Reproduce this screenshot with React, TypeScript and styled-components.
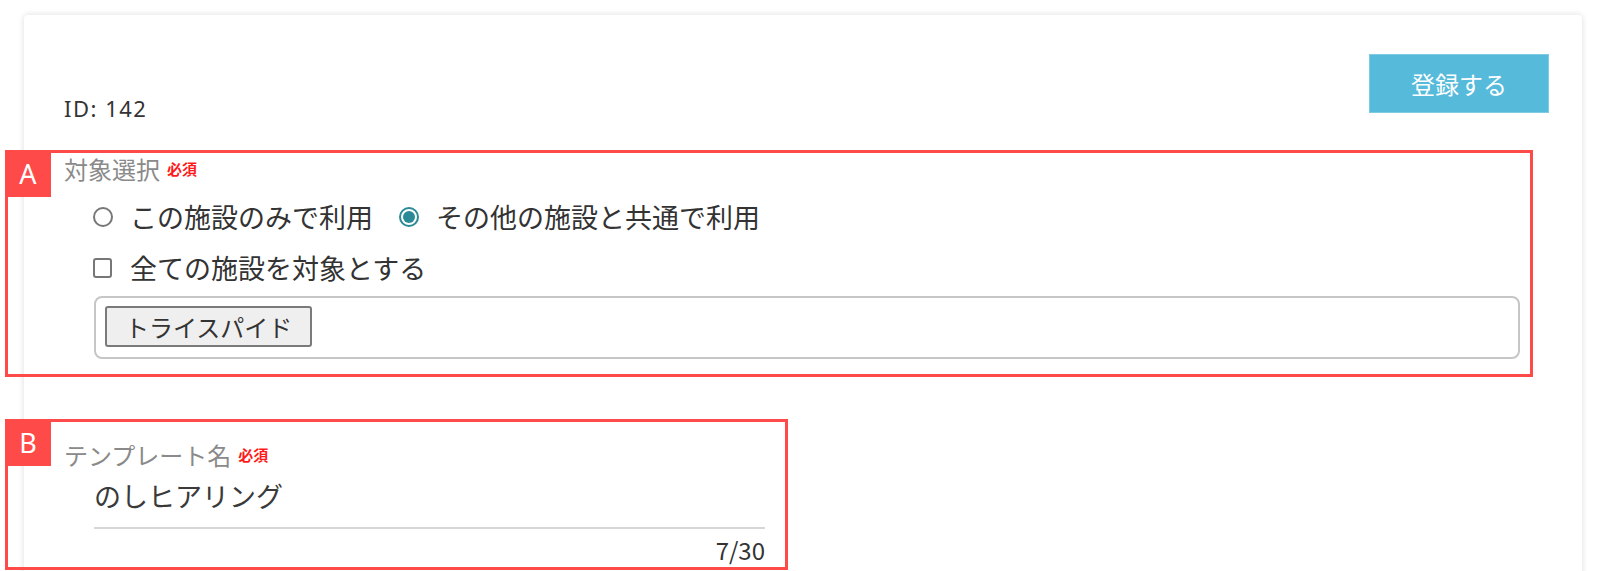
import React from 'react';
import styled, { createGlobalStyle } from 'styled-components';

const GlobalStyle = createGlobalStyle`
  html, body {
    margin: 0;
    padding: 0;
    background: #ffffff;
    overflow: hidden;
  }
  body {
    font-family: "Noto Sans CJK JP", "Noto Sans", sans-serif;
    color: #333333;
  }
`;

const Page = styled.div`
  padding: 15px 18px 0 24px;
  height: 571px;
  box-sizing: border-box;
  overflow: hidden;
`;

const Card = styled.div`
  background: #ffffff;
  border-radius: 4px;
  box-shadow: 0 0 6px rgba(0, 0, 0, 0.14);
  padding: 39px 33px 0 40px;
  min-height: 640px;
  box-sizing: border-box;
`;

const HeaderRow = styled.div`
  display: flex;
  justify-content: space-between;
  align-items: flex-end;
`;

const IdText = styled.div`
  font-family: "Noto Sans", sans-serif;
  font-size: 22px;
  letter-spacing: 1.5px;
  line-height: 28px;
  color: #333333;
`;

const SubmitButton = styled.button`
  width: 180px;
  height: 59px;
  margin-bottom: 9px;
  background: #56bada;
  border: 1px solid #7fcbe3;
  color: #ffffff;
  font-family: "Noto Sans CJK JP", sans-serif;
  font-size: 24px;
  padding: 0;
  cursor: pointer;
`;

const Section = styled.div<{ $top: number; $width?: number; $pad: number }>`
  position: relative;
  margin: ${(p) => p.$top}px 0 0 -59px;
  width: ${(p) => (p.$width ? `${p.$width}px` : '1528px')};
  border: 3px solid #ff4a4a;
  box-sizing: border-box;
  padding: ${(p) => p.$pad}px 0 0 56px;
`;

const Marker = styled.div`
  position: absolute;
  top: -3px;
  left: -3px;
  width: 46px;
  height: 47px;
  background: #ff4a4a;
  color: #ffffff;
  font-family: "Noto Sans", sans-serif;
  font-size: 27px;
  line-height: 47px;
  text-align: center;
`;

const FieldLabel = styled.div`
  display: flex;
  align-items: center;
  font-size: 24px;
  line-height: 32px;
  color: #8a8a8a;
`;

const Required = styled.span`
  margin-left: 7px;
  font-size: 15px;
  font-weight: 700;
  color: #ff1a1a;
`;

const OptionRow = styled.div<{ $top: number }>`
  display: flex;
  align-items: center;
  height: 36px;
  margin: ${(p) => p.$top}px 0 0 29px;
`;

const Option = styled.label`
  display: flex;
  align-items: center;
  margin-right: 26px;
  font-size: 27px;
  line-height: 36px;
  color: #333333;
`;

const RadioMark = styled.span<{ $checked?: boolean }>`
  width: 20px;
  height: 20px;
  flex-shrink: 0;
  box-sizing: border-box;
  border-radius: 50%;
  border: 2px solid ${(p) => (p.$checked ? '#2a8a96' : '#777777')};
  margin-right: 17px;
  display: flex;
  align-items: center;
  justify-content: center;
  &::after {
    content: '';
    display: ${(p) => (p.$checked ? 'block' : 'none')};
    width: 12px;
    height: 12px;
    border-radius: 50%;
    background: #2a8a96;
  }
`;

const CheckMark = styled.span`
  width: 19px;
  height: 20px;
  flex-shrink: 0;
  box-sizing: border-box;
  border-radius: 3px;
  border: 2px solid #777777;
  margin-right: 18px;
`;

const SelectBox = styled.div`
  margin: 10px 0 15px 30px;
  width: 1426px;
  height: 63px;
  box-sizing: border-box;
  border: 2px solid #c6c6c6;
  border-radius: 8px;
  padding: 8px 9px;
  display: flex;
  align-items: flex-start;
`;

const Tag = styled.span`
  display: inline-flex;
  align-items: center;
  height: 41px;
  box-sizing: border-box;
  padding: 0 18px;
  background: #efefef;
  border: 2px solid #7a7a7a;
  border-radius: 3px;
  font-size: 24px;
  color: #333333;
`;

const InputWrap = styled.div`
  margin: 7px 0 0 30px;
  width: 671px;
`;

const InputValue = styled.div`
  font-size: 27px;
  line-height: 36px;
  padding-bottom: 13px;
  border-bottom: 2px solid #d6d6d6;
  color: #3a3a3a;
`;

const Counter = styled.div`
  margin-top: 4px;
  text-align: right;
  font-size: 24px;
  line-height: 34px;
  color: #333333;
`;

const App = () => {
  return (
    <Page>
      <GlobalStyle />
      <Card>
        <HeaderRow>
          <IdText>ID: 142</IdText>
          <SubmitButton>登録する</SubmitButton>
        </HeaderRow>

        <Section $top={28} $pad={0}>
          <Marker>A</Marker>
          <FieldLabel>
            対象選択<Required>必須</Required>
          </FieldLabel>
          <OptionRow $top={14}>
            <Option>
              <RadioMark />
              この施設のみで利用
            </Option>
            <Option>
              <RadioMark $checked />
              その他の施設と共通で利用
            </Option>
          </OptionRow>
          <OptionRow $top={15}>
            <Option>
              <CheckMark />
              全ての施設を対象とする
            </Option>
          </OptionRow>
          <SelectBox>
            <Tag>トライスパイド</Tag>
          </SelectBox>
        </Section>

        <Section $top={42} $width={783} $pad={17}>
          <Marker>B</Marker>
          <FieldLabel>
            テンプレート名<Required>必須</Required>
          </FieldLabel>
          <InputWrap>
            <InputValue>のしヒアリング</InputValue>
            <Counter>7/30</Counter>
          </InputWrap>
        </Section>
      </Card>
    </Page>
  );
};

export default App;
